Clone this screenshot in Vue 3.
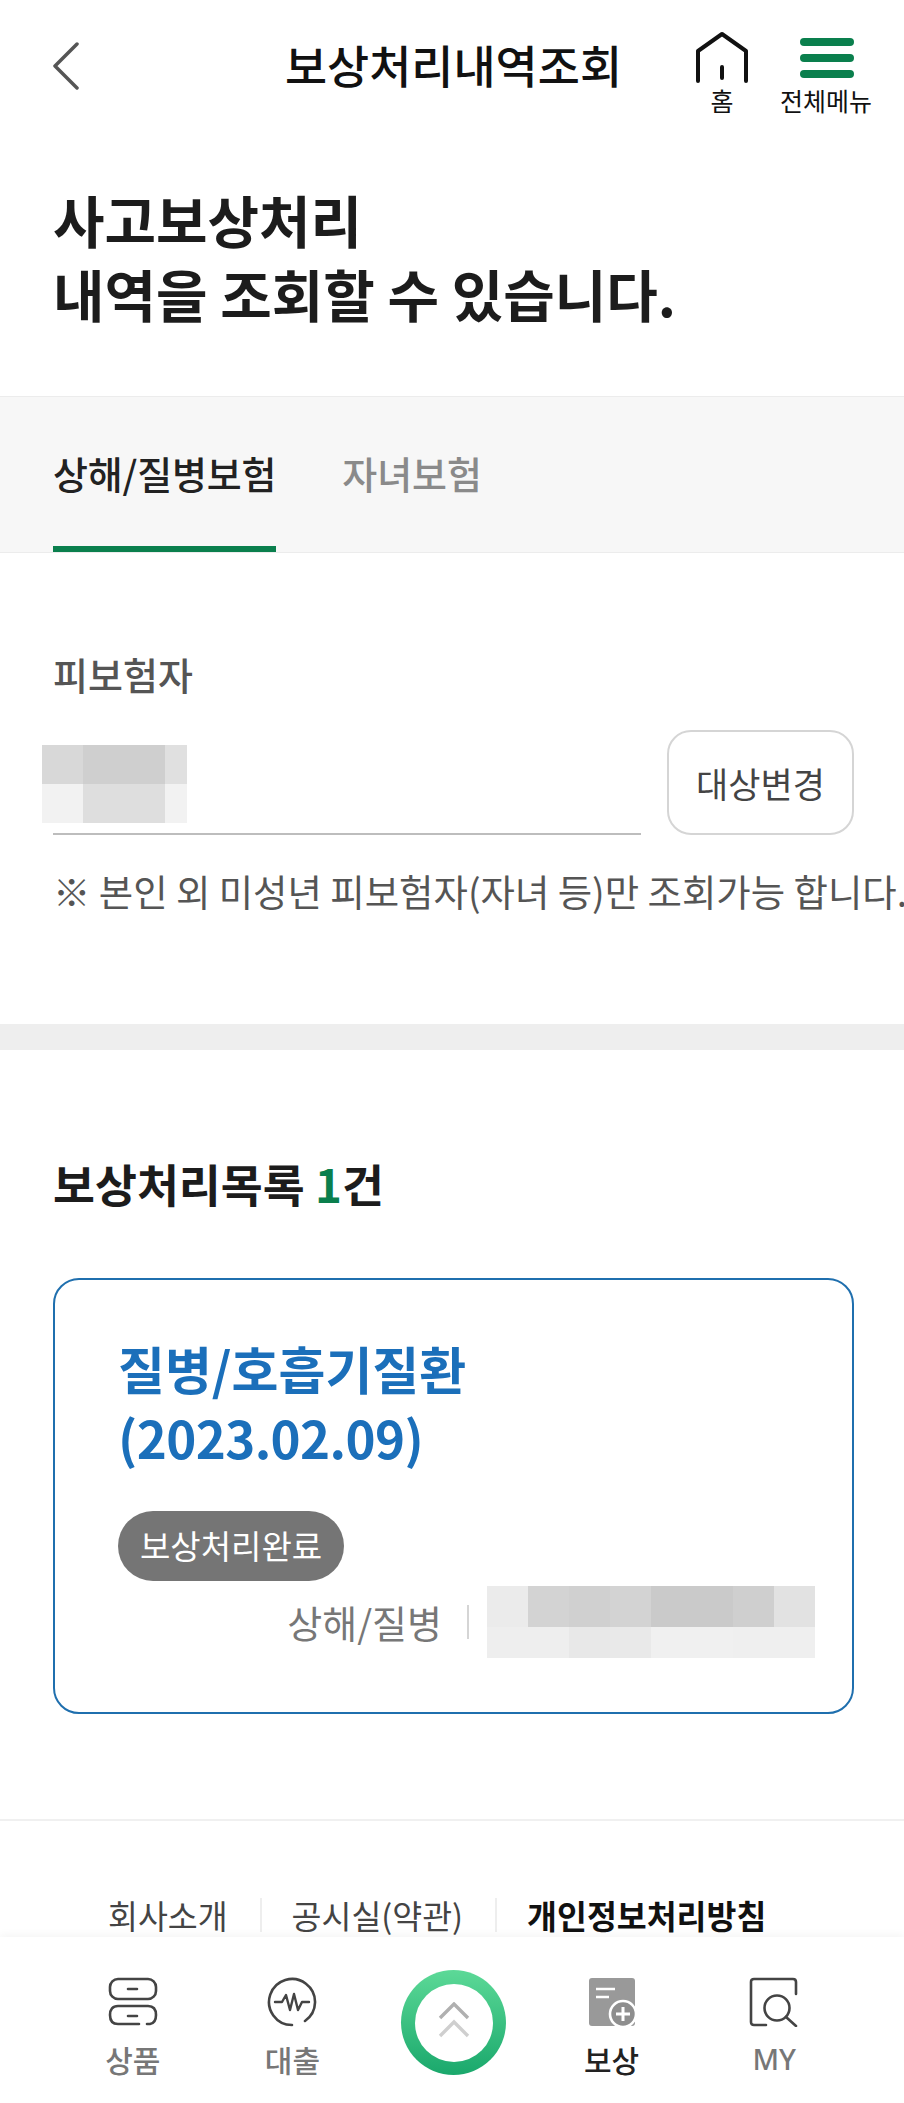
<script setup>
const nameBlur = [
  { w: 41, c: "#d8d8d8" }, { w: 82, c: "#cfcfcf" }, { w: 22, c: "#e0e0e0" },
  { w: 41, c: "#f2f2f2" }, { w: 82, c: "#dedede" }, { w: 22, c: "#f2f2f2" },
]
const numberTop = ["#ebebeb", "#d3d3d3", "#d0d0d0", "#d3d3d3", "#cacaca", "#cacaca", "#cfcfcf", "#e2e2e2"]
const numberBottom = ["#eeeeee", "#eeeeee", "#e8e8e8", "#e9e9e9", "#f0f0f0", "#f0f0f0", "#efefef", "#efefef"]
const footerLinks = ["회사소개", "공시실(약관)", "개인정보처리방침"]
</script>

<template>
  <div class="page">
    <header class="top">
      <div class="top-left">
        <svg class="back" width="28" height="48" viewBox="0 0 28 48">
          <path d="M25 2 L3 24 L25 46" fill="none" stroke="#555" stroke-width="3.5" stroke-linecap="round" stroke-linejoin="round" />
        </svg>
      </div>
      <h1 class="top-title">보상처리내역조회</h1>
      <div class="top-right">
        <div class="top-btn">
          <svg width="54" height="52" viewBox="0 0 54 52">
            <path d="M3 49 V19 L27 2 L51 19 V49 M27 35 V46" fill="none" stroke="#111" stroke-width="4" stroke-linecap="round" stroke-linejoin="round" />
          </svg>
          <span>홈</span>
        </div>
        <div class="top-btn">
          <svg class="burger" width="54" height="52" viewBox="0 0 54 52">
            <rect x="0" y="6" width="54" height="8" rx="4" fill="#0a7f4d" />
            <rect x="0" y="22" width="54" height="8" rx="4" fill="#0a7f4d" />
            <rect x="0" y="38" width="54" height="8" rx="4" fill="#0a7f4d" />
          </svg>
          <span>전체메뉴</span>
        </div>
      </div>
    </header>

    <h2 class="hero">사고보상처리<br />내역을 조회할 수 있습니다.</h2>

    <nav class="tabs">
      <div class="tab active">상해/질병보험</div>
      <div class="tab">자녀보험</div>
    </nav>

    <section class="insured">
      <div class="label">피보험자</div>
      <div class="field-row">
        <div class="field">
          <div class="mosaic name-mosaic">
            <i v-for="(b, i) in nameBlur" :key="i" :style="{ width: b.w + 'px', background: b.c }"></i>
          </div>
        </div>
        <button class="change-btn">대상변경</button>
      </div>
      <p class="note">※ 본인 외 미성년 피보험자(자녀 등)만 조회가능 합니다.</p>
    </section>

    <div class="divider"></div>

    <section class="list">
      <h3 class="list-title">보상처리목록 <em>1</em>건</h3>
      <article class="card">
        <div class="card-title">질병/호흡기질환<br /><span class="date">(2023.02.09)</span></div>
        <span class="badge">보상처리완료</span>
        <div class="card-row">
          <span class="kind">상해/질병</span>
          <span class="bar"></span>
          <div class="number-mosaic">
            <div class="num-top"><i v-for="(c, i) in numberTop" :key="i" :style="{ background: c }"></i></div>
            <div class="num-bottom"><i v-for="(c, i) in numberBottom" :key="i" :style="{ background: c }"></i></div>
          </div>
        </div>
      </article>
    </section>

    <footer class="foot">
      <template v-for="(l, i) in footerLinks" :key="l">
        <span v-if="i" class="foot-sep"></span>
        <a :class="{ strong: i === 2 }">{{ l }}</a>
      </template>
    </footer>

    <nav class="bottom">
      <div class="nav-item">
        <svg width="50" height="50" viewBox="0 0 50 50" fill="none" stroke="#444" stroke-width="2.6" stroke-linecap="round">
          <rect x="2" y="2" width="46" height="20" rx="8" />
          <path d="M20 12 H29 M20 39 H29" />
          <path d="M39 47 H42 Q48 46 48 38 Q48 29 40 29 H10 Q2 29 2 38 Q2 47 10 47 H31" />
        </svg>
        <span>상품</span>
      </div>
      <div class="nav-item">
        <svg width="50" height="50" viewBox="0 0 50 50" fill="none" stroke="#444" stroke-width="2.6" stroke-linecap="round" stroke-linejoin="round">
          <path d="M38 44 A23 23 0 1 0 25 48" />
          <path d="M8 25 H15 L19 18 L23 33 L27 17 L31 33 L35 25 H42" stroke-width="2.4" />
        </svg>
        <span>대출</span>
      </div>
      <div class="nav-item center-slot">
        <div class="ring">
          <div class="ring-in">
            <svg width="32" height="42" viewBox="0 0 32 42" fill="none" stroke-width="3.4">
              <path d="M2 16 L16 2 L30 16" stroke="#b0b0b0" />
              <path d="M2 34 L16 20 L30 34" stroke="#cfcfcf" />
            </svg>
          </div>
        </div>
      </div>
      <div class="nav-item current">
        <svg width="50" height="50" viewBox="0 0 50 50">
          <rect x="2" y="1" width="46" height="48" rx="3" fill="#999" />
          <path d="M9 12 H28 M9 20 H22" stroke="#fff" stroke-width="2.4" />
          <circle cx="36" cy="37" r="13" fill="#8e8e8e" stroke="#fff" stroke-width="2.6" />
          <path d="M36 30 V44 M29 37 H43" stroke="#fff" stroke-width="3" />
        </svg>
        <span>보상</span>
      </div>
      <div class="nav-item last">
        <svg width="50" height="50" viewBox="0 0 50 50" fill="none" stroke="#444" stroke-width="2.6" stroke-linecap="round">
          <path d="M17 48 H5 Q2 48 2 45 V5 Q2 2 5 2 H44 Q47 2 47 5 V17" />
          <circle cx="28" cy="31" r="12.5" />
          <path d="M37 40 L47 49" />
        </svg>
        <span class="my">MY</span>
      </div>
    </nav>
  </div>
</template>

<style>
body {
  background: #fff;
}
</style>

<style scoped>
.page {
  position: relative;
  width: 904px;
  height: 2103px;
  overflow: hidden;
  background: #fff;
  font-family: "Noto Sans CJK KR", "Noto Sans", sans-serif;
  color: #222;
}
.top {
  display: grid;
  grid-template-columns: 1fr auto 1fr;
  align-items: start;
  height: 130px;
}
.top-left {
  padding: 42px 0 0 52px;
}
.back {
  display: block;
}
.top-title {
  margin: 31px 0 0 3px;
  font-size: 45.8px;
  line-height: 66px;
  font-weight: 500;
  color: #111;
}
.top-right {
  display: flex;
  justify-content: flex-end;
  padding: 32px 26px 0 0;
}
.top-btn {
  width: 104px;
  display: flex;
  flex-direction: column;
  align-items: center;
}
.top-btn svg {
  display: block;
}
.top-btn .burger {
  margin-left: 2px;
}
.top-btn span {
  font-size: 25px;
  line-height: 32px;
  color: #111;
  white-space: nowrap;
}
.hero {
  margin: 52px 0 0 53px;
  font-size: 56px;
  line-height: 74px;
  font-weight: 700;
  color: #1c1c1c;
}
.tabs {
  display: flex;
  gap: 66px;
  margin-top: 66px;
  height: 157px;
  padding-left: 53px;
  box-sizing: border-box;
  background: #f7f7f7;
  border-top: 1px solid #ececec;
  border-bottom: 1px solid #ececec;
}
.tab {
  font-size: 38px;
  line-height: 151px;
  font-weight: 500;
  color: #8a8a8a;
  white-space: nowrap;
}
.tab.active {
  color: #222;
  height: 155px;
  letter-spacing: -0.2px;
  border-bottom: 6px solid #0a7f4d;
  box-sizing: border-box;
}
.insured {
  padding: 91px 50px 0 53px;
  height: 471px;
  box-sizing: border-box;
}
.label {
  font-size: 38px;
  line-height: 60px;
  font-weight: 500;
  color: #555;
}
.field-row {
  display: flex;
  gap: 26px;
  margin-top: 26px;
  align-items: flex-end;
}
.field {
  width: 588px;
  height: 105px;
  box-sizing: border-box;
  border-bottom: 2px solid #bdbdbd;
  padding-top: 15px;
}
.mosaic {
  display: flex;
  flex-wrap: wrap;
  width: 145px;
  margin-left: -11px;
}
.mosaic i {
  display: block;
  height: 39px;
}
.change-btn {
  width: 187px;
  height: 105px;
  padding: 0;
  border: 2px solid #d5d5d5;
  border-radius: 24px;
  background: #fff;
  font-family: inherit;
  font-size: 35px;
  color: #444;
}
.note {
  margin: 26px 0 0;
  font-size: 37.4px;
  line-height: 60px;
  color: #555;
  white-space: nowrap;
}
.divider {
  height: 26px;
  background: #eeeeee;
}
.list {
  padding: 100px 50px 0 53px;
  height: 771px;
  box-sizing: border-box;
  border-bottom: 2px solid #f0f0f0;
}
.list-title {
  margin: 0;
  font-size: 45.6px;
  line-height: 66px;
  font-weight: 700;
  color: #1c1c1c;
}
.list-title em {
  font-style: normal;
  color: #0a7f4d;
}
.card {
  margin-top: 62px;
  height: 436px;
  box-sizing: border-box;
  padding: 54px 37px 0 63px;
  border: 2px solid #1f6fae;
  border-radius: 26px;
}
.card-title {
  font-size: 51px;
  line-height: 69px;
  font-weight: 700;
  color: #1b6fba;
}
.date {
  letter-spacing: -0.6px;
}
.badge {
  display: inline-block;
  margin-top: 39px;
  height: 70px;
  padding: 0 22px;
  border-radius: 35px;
  background: #757575;
  color: #fff;
  font-size: 33px;
  line-height: 68px;
}
.card-row {
  display: flex;
  justify-content: flex-end;
  align-items: center;
  margin-top: 5px;
}
.kind {
  font-size: 38px;
  line-height: 72px;
  color: #777;
}
.bar {
  width: 2px;
  height: 34px;
  margin: 0 18px 0 25px;
  background: #d5d5d5;
}
.number-mosaic {
  width: 328px;
}
.num-top,
.num-bottom {
  display: flex;
}
.num-top i,
.num-bottom i {
  display: block;
  width: 41px;
}
.num-top i {
  height: 41px;
}
.num-bottom i {
  height: 31px;
}
.foot {
  display: flex;
  align-items: center;
  padding: 69px 0 0 108px;
}
.foot a {
  font-size: 32.5px;
  line-height: 50px;
  color: #444;
  white-space: nowrap;
}
.foot a.strong {
  font-weight: 700;
  color: #111;
}
.foot-sep {
  width: 2px;
  height: 34px;
  margin: 0 30px 0 32px;
  background: #eeeeee;
}
.bottom {
  position: absolute;
  left: 0;
  right: 0;
  bottom: 0;
  height: 166px;
  padding: 40px 53px 0;
  box-sizing: border-box;
  display: grid;
  grid-template-columns: repeat(5, 1fr);
  background: #fff;
  box-shadow: 0 -3px 8px rgba(0, 0, 0, 0.04);
}
.nav-item {
  display: flex;
  flex-direction: column;
  align-items: center;
}
.nav-item.last {
  padding-left: 6px;
}
.nav-item svg {
  display: block;
}
.nav-item span {
  margin-top: 10px;
  font-size: 30px;
  line-height: 44px;
  font-weight: 500;
  color: #777;
}
.nav-item.current span {
  color: #222;
}
.nav-item span.my {
  font-family: "Noto Sans", sans-serif;
  font-size: 29px;
}
.ring {
  position: absolute;
  top: 33px;
  left: 401px;
  width: 105px;
  height: 105px;
  border-radius: 50%;
  background: linear-gradient(180deg, #5cd997, #1aa86c);
  display: flex;
  align-items: center;
  justify-content: center;
}
.ring-in {
  width: 78px;
  height: 78px;
  border-radius: 50%;
  background: #fff;
  display: flex;
  align-items: center;
  justify-content: center;
}
</style>
